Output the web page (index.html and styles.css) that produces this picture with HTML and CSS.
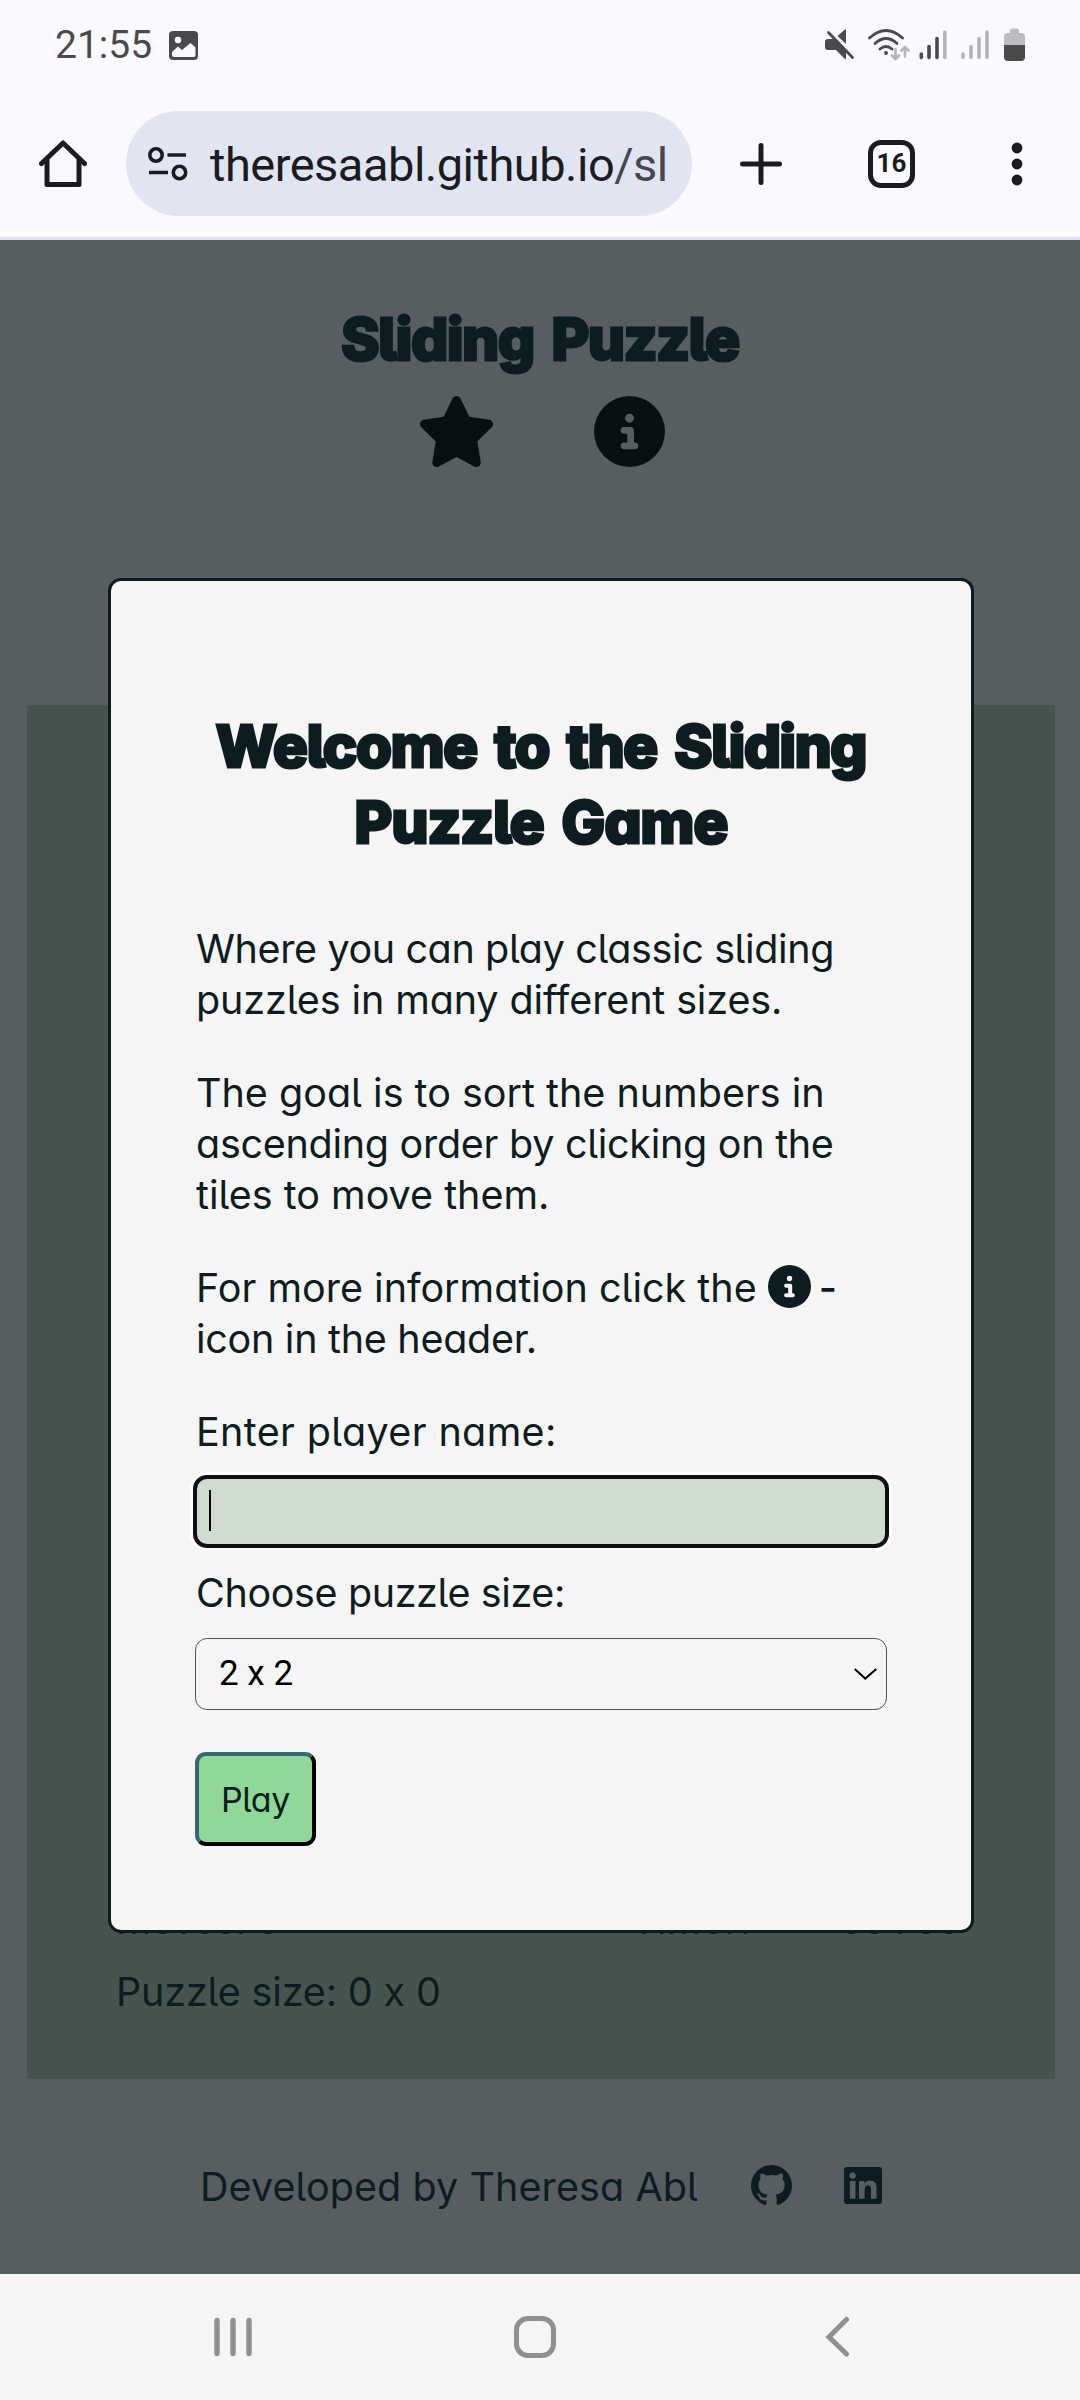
FILE: index.html
```html
<!DOCTYPE html>
<html lang="en">
<head>
<meta charset="utf-8">
<title>Sliding Puzzle</title>
<link rel="stylesheet" href="styles.css">
</head>
<body>
<div class="screen">
  <div class="status">
    <span class="clock">21:55</span>
    <svg class="photo" width="29" height="29" viewBox="0 0 29 29"><rect width="29" height="29" rx="4" fill="#4a4a4c"/><circle cx="9" cy="9" r="3.2" fill="#faf9ff"/><path d="M3 21l6-5.500 4 3.500 8.500-7 5 4.500V24q0 2-2 2H5q-2 0-2-2z" fill="#faf9ff"/></svg>
    <svg class="indicators" width="202" height="36" viewBox="824 27 202 36">
      <path d="M837.500 36L845 29.500q1-.5 1 .5V44zM828 39h6L846 51.500V58.500q0 1-1 .5L836 50h-8q-3 0-3-3v-5q0-3 3-3z" fill="#4a4a4c"/>
      <path d="M828.500 32.500L852.500 57.500" stroke="#4a4a4c" stroke-width="2.800" stroke-linecap="round"/>
      <g fill="none" stroke="#4a4a4c" stroke-width="2.800" stroke-linecap="round"><path d="M869.500 38q16.500-15 33 0M875 43.500q11-10 22 0M880 49q6-5 12 0"/></g><circle cx="886" cy="53" r="2" fill="#4a4a4c"/>
      <g fill="none" stroke="#b4b3b8" stroke-width="2.600" stroke-linecap="round" stroke-linejoin="round"><path d="M895.500 49v9.500M892 55.500l3.500 3.500 3.500-3.500M905 56.500v-9M901.500 50.500l3.500-3.500 3.500 3.500"/></g>
      <g stroke-width="3.600" stroke-linecap="round"><path d="M921.300 54v3.500M929 46.500v11M937 38.500v19" stroke="#4a4a4c"/><path d="M944.800 32v25.500M963 54v3.500M971 46.500v11M979 38.500v19M987 32v25.500" stroke="#b4b3b8"/></g>
      <path d="M1010 33v-2q0-2.500 2.500-2.500h4q2.500 0 2.500 2.500v2h2q4 0 4 4v9h-21v-9q0-4 4-4z" fill="#bcbbc1"/><path d="M1004 45h21v12q0 4-4 4h-13q-4 0-4-4z" fill="#4a4a4c"/>
    </svg>
  </div>
  <div class="toolbar">
    <svg class="home" width="48" height="48" viewBox="0 0 48 48" fill="none" stroke="#1b1c20" stroke-width="5" stroke-linejoin="round" stroke-linecap="round"><path d="M2.500 23.500L24 3l21.500 20.500"/><path d="M8 20v24.500h32V20"/></svg>
    <div class="omnibox">
      <svg width="40" height="34" viewBox="0 0 40 34" fill="none" stroke="#1b1c20" stroke-width="3.600"><circle cx="8" cy="8" r="6.200"/><path d="M19.500 8H38M1 25.500h19"/><circle cx="31.500" cy="25.500" r="6.200"/></svg>
      <span class="url">theresaabl.github.io<span class="path">/sl</span></span>
    </div>
    <svg class="plus" width="44" height="44" viewBox="0 0 44 44" stroke="#1b1c20" stroke-width="5" stroke-linecap="round"><path d="M3.500 22h37M22 3.500v37"/></svg>
    <div class="tabs">16</div>
    <svg class="dots" width="12" height="44" viewBox="0 0 12 44" fill="#1b1c20"><circle cx="6" cy="6" r="5.400"/><circle cx="6" cy="22" r="5.400"/><circle cx="6" cy="38" r="5.400"/></svg>
  </div>
  <div class="page">
    <header class="header">
      <h1 class="title">Sliding Puzzle</h1>
      <div class="actions">
        <svg width="73" height="71" viewBox="24 0 528 512" fill="#081012" preserveAspectRatio="none"><path d="M316.900 18C311.600 7 300.400 0 288.100 0s-23.400 7-28.800 18L195 150.300 51.400 171.500c-12 1.800-22 10.200-25.700 21.700s-.7 24.200 7.900 32.700L137.800 329 113.200 474.700c-2 12 3 24.200 12.900 31.300s23 8 33.800 2.300l128.300-68.500 128.300 68.500c10.800 5.700 23.900 4.900 33.800-2.300s14.900-19.300 12.900-31.300L438.500 329 542.700 225.900c8.600-8.500 11.700-21.200 7.900-32.700s-13.700-19.900-25.700-21.700L381.200 150.300 316.900 18z"/></svg>
        <svg width="71" height="71" viewBox="0 0 512 512" fill="#081012"><path d="M256 512A256 256 0 1 0 256 0a256 256 0 1 0 0 512zM216 336l24 0 0-64-24 0c-13.300 0-24-10.700-24-24s10.700-24 24-24l48 0c13.300 0 24 10.700 24 24l0 88 8 0c13.300 0 24 10.700 24 24s-10.700 24-24 24l-80 0c-13.300 0-24-10.700-24-24s10.700-24 24-24zm40-208a32 32 0 1 1 0 64 32 32 0 1 1 0-64z"/></svg>
      </div>
    </header>
    <main class="game">
      <div class="row"><span class="moves">Moves: 0</span><span class="timer">Timer:</span><span class="time">00 : 00</span></div>
      <div class="row"><span class="size">Puzzle size: 0 x 0</span></div>
    </main>
    <footer class="footer">
      <span class="credit">Developed by Theresa Abl</span>
      <svg class="github" width="41" height="40" viewBox="0 0 16 15.600" preserveAspectRatio="none" fill="#0d1c1e"><path d="M8 0C3.580 0 0 3.580 0 8c0 3.540 2.290 6.530 5.470 7.590.4.070.55-.17.55-.38 0-.19-.01-.82-.01-1.490-2.010.37-2.530-.49-2.690-.94-.09-.23-.48-.94-.82-1.130-.28-.15-.68-.52-.01-.53.63-.01 1.080.58 1.230.82.72 1.210 1.870.87 2.330.66.070-.52.28-.87.51-1.070-1.780-.2-3.640-.89-3.640-3.950 0-.87.31-1.590.82-2.150-.08-.2-.36-1.020.08-2.120 0 0 .67-.21 2.200.82.64-.18 1.320-.27 2-.27.68 0 1.360.09 2 .27 1.530-1.040 2.200-.82 2.200-.82.44 1.100.16 1.920.08 2.120.51.56.82 1.270.82 2.150 0 3.070-1.870 3.750-3.650 3.950.29.25.54.73.54 1.480 0 1.070-.01 1.930-.01 2.200 0 .21.15.46.55.38A8.013 8.013 0 0 0 16 8c0-4.420-3.580-8-8-8z"/></svg>
      <svg class="linkedin" width="38" height="37" viewBox="0 32 448 448" preserveAspectRatio="none" fill="#0d1c1e"><path d="M416 32H31.900C14.300 32 0 46.500 0 64.300v383.400C0 465.500 14.300 480 31.900 480H416c17.600 0 32-14.500 32-32.300V64.300c0-17.800-14.400-32.300-32-32.300zM135.400 416H69V202.200h66.500V416zm-33.200-243c-21.300 0-38.500-17.300-38.500-38.500S80.900 96 102.200 96c21.200 0 38.500 17.300 38.500 38.500 0 21.300-17.200 38.500-38.500 38.500zm282.100 243h-66.400V312c0-24.800-.5-56.700-34.500-56.700-34.600 0-39.900 27-39.900 54.900V416h-66.400V202.200h63.700v29.200h.9c8.900-16.800 30.600-34.500 62.900-34.500 67.200 0 79.700 44.300 79.700 101.900V416z"/></svg>
    </footer>
    <div class="modal">
      <h2 class="welcome"><span class="l1">Welcome to the Sliding</span><span class="l2">Puzzle Game</span></h2>
      <p><span class="line snug">Where you can play classic sliding</span><span class="line close">puzzles in many different sizes.</span></p>
      <p><span class="line">The goal is to sort the numbers in</span><span class="line tight">ascending order by clicking on the</span><span class="line">tiles to move them.</span></p>
      <p><span class="line">For more information click the <svg class="info" width="43" height="43" viewBox="0 0 512 512" fill="#0d1c1e"><path d="M256 512A256 256 0 1 0 256 0a256 256 0 1 0 0 512zM216 336l24 0 0-64-24 0c-13.300 0-24-10.700-24-24s10.700-24 24-24l48 0c13.300 0 24 10.700 24 24l0 88 8 0c13.300 0 24 10.700 24 24s-10.700 24-24 24l-80 0c-13.300 0-24-10.700-24-24s10.700-24 24-24zm40-208a32 32 0 1 1 0 64 32 32 0 1 1 0-64z"/></svg><span class="hyphen">-</span></span><span class="line tight">icon in the header.</span></p>
      <div class="label wide">Enter player name:</div>
      <div class="input"><span class="caret"></span></div>
      <div class="label snug">Choose puzzle size:</div>
      <div class="select"><span>2 x 2</span><svg width="23" height="12" viewBox="0 0 23 12" fill="none" stroke="#000" stroke-width="2"><path d="M.7 1l10.600 9.600L22.300 1"/></svg></div>
      <button class="play">Play</button>
    </div>
  </div>
  <nav class="nav">
    <svg width="40" height="42" viewBox="0 0 40 42" stroke="#909090" stroke-width="5.400" stroke-linecap="round"><path d="M4 4.500v33M20 4.500v33M36 4.500v33"/></svg>
    <svg class="nav-home" width="42" height="42" viewBox="0 0 42 42" fill="none" stroke="#909090" stroke-width="5"><rect x="2.500" y="2.500" width="37" height="37" rx="11.500"/></svg>
    <svg width="25" height="42" viewBox="0 0 25 42" fill="none" stroke="#909090" stroke-width="5" stroke-linecap="round"><path d="M21.500 3.500L4 21l17.500 17"/></svg>
  </nav>
</div>
</body>
</html>
```
FILE: styles.css
```css
* { box-sizing: border-box; }
body { margin: 0; }
svg { display: block; flex: none; }

.screen {
  width: 1080px;
  height: 2400px;
  display: flex;
  flex-direction: column;
  overflow: hidden;
  background: #faf9ff;
  color: #0d1c1e;
  font-family: Roboto, sans-serif;
}

/* Android status bar */
.status {
  height: 90px;
  padding: 0 54px 0 55px;
  display: flex;
  align-items: center;
}
.clock {
  font-size: 39px;
  line-height: 46px;
  color: #4a4a4c;
  width: 114px;
}
.indicators { margin-left: auto; }

/* Browser toolbar */
.toolbar {
  height: 150px;
  padding: 0 57px 0 39px;
  display: flex;
  align-items: center;
  border-bottom: 3px solid #dfe2ec;
}
.omnibox {
  width: 566px;
  height: 105px;
  margin-left: 39px;
  padding-left: 22px;
  border-radius: 53px;
  background: #e1e5f1;
  display: flex;
  align-items: center;
}
.url {
  margin-left: 22px;
  padding-top: 2px;
  font-size: 47px;
  line-height: 56px;
  letter-spacing: -0.5px;
  color: #1b1c20;
  white-space: nowrap;
}
.path { color: #45474e; }
.plus { margin-left: 47px; }
.tabs {
  width: 47px;
  height: 48px;
  margin-left: 85px;
  border: 5px solid #1b1c20;
  border-radius: 13px;
  font-size: 26px;
  line-height: 37px;
  font-weight: 700;
  text-align: center;
  color: #1b1c20;
}
.dots { margin-left: auto; }

/* Web page */
.page {
  position: relative;
  height: 2034px;
  display: flex;
  flex-direction: column;
  background: #565e61;
  font-family: Inter, sans-serif;
  font-size: 39.5px;
  line-height: 51px;
  font-feature-settings: "cv11", "cv05";
}
.header {
  height: 465px;
  padding-top: 61px;
}
.title, .welcome {
  margin: 0;
  font-size: 58px;
  line-height: 76px;
  font-weight: 800;
  text-align: center;
  word-spacing: 6px;
  -webkit-text-stroke: 3px #0d1c1e;
  stroke-linejoin: round;
}
.title { letter-spacing: -1.15px; }
.actions {
  margin-top: 19px;
  padding-left: 5px;
  display: flex;
  justify-content: center;
  gap: 101px;
}
.game {
  height: 1374px;
  margin: 0 25px 0 27px;
  padding: 0 88px 61px 89px;
  display: flex;
  flex-direction: column;
  justify-content: flex-end;
  gap: 21px;
  background: #45544e;
}
.row { display: flex; white-space: nowrap; }
.row span { flex: none; }
.moves { width: 515px; letter-spacing: -1px; }
.timer { width: 208px; letter-spacing: 0.2px; }
.time { letter-spacing: -1.8px; }
.size { letter-spacing: -0.15px; }
.footer {
  height: 195px;
  padding: 82px 0 0 200px;
  display: flex;
}
.credit { width: 551px; padding-top: 1px; letter-spacing: 0.08px; }
.github { margin-top: 4px; }
.linkedin { margin: 6px 0 0 52px; }

/* Welcome dialog, over the page */
.modal {
  position: absolute;
  left: 108px;
  top: 338px;
  width: 866px;
  height: 1355px;
  padding: 127px 84px 0;
  border: 3px solid #0d1c1e;
  border-radius: 13px;
  background: #f5f5f5;
}
.welcome { margin-bottom: 64px; }
.l1, .l2, .line { display: block; white-space: nowrap; }
.l1 { letter-spacing: -1.27px; }
.l2 { letter-spacing: -0.85px; }
.modal p { margin: 0 0 42px; }
.line, .label { height: 51px; padding-left: 1px; }
.snug { letter-spacing: -0.38px; }
.close { letter-spacing: -0.12px; }
.tight { letter-spacing: -0.28px; }
.wide { letter-spacing: 0.36px; }
.info { display: inline-block; vertical-align: -6px; }
.hyphen { margin-left: 8px; font-weight: 500; }
.input {
  height: 73px;
  margin: 17px -2px 20px;
  padding: 11px 0 0 12px;
  border: 4px solid #101010;
  border-radius: 14px;
  background: #cfddd0;
  box-shadow: 0 0 0 3px #fff;
}
.caret {
  display: block;
  width: 2px;
  height: 41px;
  background: #000;
}
.select {
  height: 72px;
  margin-top: 19px;
  padding: 0 9px 0 23px;
  display: flex;
  align-items: center;
  justify-content: space-between;
  border: 1px solid #4a5558;
  border-radius: 12px;
  font: 35px/70px Roboto, sans-serif;
  color: #000;
}
.play {
  display: block;
  width: 121px;
  height: 94px;
  margin: 42px 0 0;
  padding: 0;
  border: 4px solid;
  border-color: #336a73 #000 #000 #336a73;
  border-radius: 11px;
  background: #90d897;
  color: #0d1c1e;
  font-family: inherit;
  font-size: 34px;
  letter-spacing: -0.4px;
  font-feature-settings: inherit;
}

/* Android navigation bar */
.nav {
  height: 126px;
  padding: 0 230px 0 213px;
  display: flex;
  align-items: center;
  justify-content: space-between;
  background: #f5f5f5;
}
.nav-home { margin-left: -8px; }
```
